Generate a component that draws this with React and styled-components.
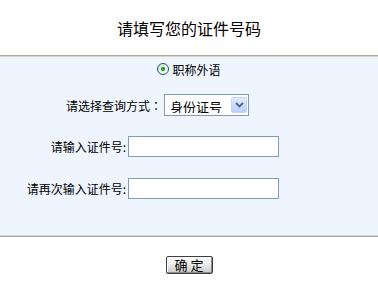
import React from 'react';
import styled, { createGlobalStyle } from 'styled-components';

const GlobalStyle = createGlobalStyle`
    body {
        margin: 0;
        background: #ffffff;
        font-family: "Noto Sans CJK SC", "Liberation Sans", sans-serif;
        color: #000;
    }
`;

const Page = styled.div`
    width: 378px;
    display: flex;
    flex-direction: column;
`;

const Title = styled.div`
    height: 55px;
    display: flex;
    align-items: center;
    justify-content: center;
    font-size: 16px;
    padding-top: 1px;
    box-sizing: border-box;
`;

const Panel = styled.div`
    background-color: #eef5fe;
    border-top: 1px solid #aca899;
    border-bottom: 1px solid #aca899;
    box-shadow: inset 0 1px 0 #d9d4c6, inset 0 -1px 0 #d9d4c6;
    display: flex;
    flex-direction: column;
    padding-bottom: 37px;
`;

const Row = styled.div`
    display: flex;
    align-items: center;
    justify-content: ${p => (p.$center ? 'center' : 'flex-start')};
    margin-top: ${p => p.$mt}px;
    height: ${p => p.$h}px;
    font-size: 12px;
`;

const Label = styled.label`
    width: ${p => p.$w}px;
    text-align: right;
    padding-right: 2px;
    box-sizing: border-box;
    font-size: 12px;
    white-space: nowrap;
`;

const Colon = styled.span`
    font-family: "Noto Sans CJK TC", sans-serif;
`;

const Radio = styled.span`
    width: 12px;
    height: 12px;
    box-sizing: border-box;
    border-radius: 50%;
    border: 1px solid #1c5180;
    background: linear-gradient(135deg, #dcdcd7, #ffffff);
    display: inline-flex;
    align-items: center;
    justify-content: center;
    margin-right: 3px;

    &::after {
        content: '';
        width: 4px;
        height: 4px;
        border-radius: 50%;
        background: #21a121;
        box-shadow: 0 0 1px #6fd66f;
    }
`;

const SelectBox = styled.div`
    width: 85px;
    height: 22px;
    box-sizing: border-box;
    border: 1px solid #7f9db9;
    background: #fff;
    display: flex;
    align-items: center;
    padding: 2px 1px 2px 2px;
    gap: 2px;

    select {
        appearance: none;
        border: none;
        outline: none;
        background: transparent;
        font-family: inherit;
        font-size: 13px;
        color: #000;
        flex: 1;
        padding: 0 0 0 3px;
        height: 100%;
    }
`;

const Arrow = styled.span`
    width: 16px;
    height: 16px;
    border: 1px solid #c3d3fd;
    border-radius: 2px;
    box-sizing: border-box;
    background: linear-gradient(180deg, #e1eafe, #bccdf8);
    display: flex;
    align-items: center;
    justify-content: center;
`;

const TextInput = styled.input`
    width: 151px;
    height: 21px;
    box-sizing: border-box;
    border: 1px solid #7f9db9;
    background: #fff;
    margin: 0;
    padding: 1px 3px;
    font-size: 12px;
`;

const Footer = styled.div`
    display: flex;
    justify-content: center;
    padding-top: 19px;
`;

const Button = styled.button`
    width: 47px;
    height: 18px;
    box-sizing: border-box;
    border: 1px solid #404040;
    border-radius: 2px;
    background: linear-gradient(180deg, #ffffff 0%, #ececec 45%, #c9c9c9 100%);
    box-shadow: inset -1px -1px 0 #8a8a8a, inset 1px 1px 0 #ffffff;
    font-family: inherit;
    font-size: 13px;
    line-height: 14px;
    padding: 0;
    color: #000;
`;

const App = () => (
    <Page>
        <GlobalStyle />
        <Title>请填写您的证件号码</Title>
        <Panel>
            <Row $center $mt={6} $h={14}>
                <Radio />
                <span>职称外语</span>
            </Row>
            <Row $mt={18} $h={22}>
                <Label $w={164}>请选择查询方式<Colon>：</Colon></Label>
                <SelectBox>
                    <select defaultValue="身份证号">
                        <option>身份证号</option>
                    </select>
                    <Arrow>
                        <svg width="9" height="6" viewBox="0 0 9 6">
                            <path d="M1 1 L4.5 4.5 L8 1" fill="none" stroke="#4d6185" strokeWidth="1.8" />
                        </svg>
                    </Arrow>
                </SelectBox>
            </Row>
            <Row $mt={20} $h={21}>
                <Label $w={128}>请输入证件号:</Label>
                <TextInput type="text" />
            </Row>
            <Row $mt={21} $h={21}>
                <Label $w={128}>请再次输入证件号:</Label>
                <TextInput type="text" />
            </Row>
        </Panel>
        <Footer>
            <Button>确 定</Button>
        </Footer>
    </Page>
);

export default App;
